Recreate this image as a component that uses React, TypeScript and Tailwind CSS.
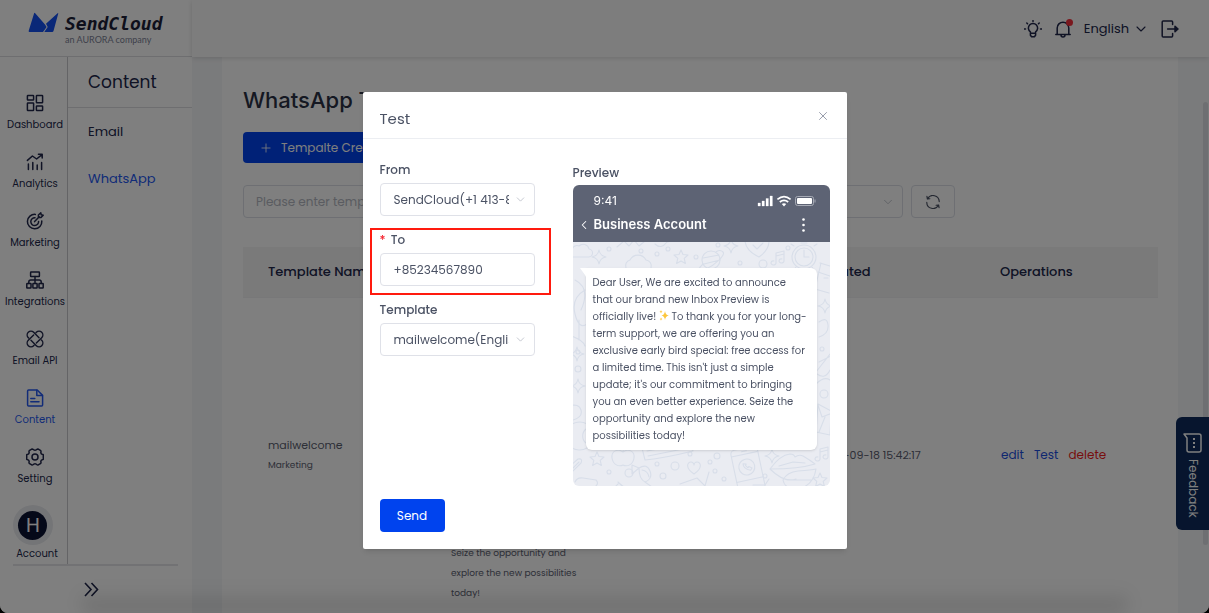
import React, { useState } from 'react'
import { ChevronDown, ChevronLeft, Plus, X } from 'lucide-react'

const greeting = 'Dear User, We are excited to announce\nthat our brand new Inbox Preview is\nofficially live! '
const offer =
  " To thank you for your long-\nterm support, we are offering you an\nexclusive early bird special: free access for\na limited time. This isn't just a simple\nupdate; it's our commitment to bringing\nyou an even better experience. Seize the\nopportunity and explore the new\npossibilities today!"

function Icon({ children, size = 18 }: { children: React.ReactNode; size?: number }) {
  return (
    <svg width={size} height={size} viewBox="0 0 18 18" fill="none" stroke="currentColor" strokeWidth="1.5" strokeLinecap="round" strokeLinejoin="round" aria-hidden="true">
      {children}
    </svg>
  )
}

const navItems = [
  {
    label: 'Dashboard',
    icon: (
      <Icon>
        <rect x="1.4" y="1.4" width="6.2" height="4.6" rx="0.6" />
        <rect x="10.4" y="1.4" width="6.2" height="7.4" rx="0.6" />
        <rect x="1.4" y="9" width="6.2" height="7.6" rx="0.6" />
        <rect x="10.4" y="12" width="6.2" height="4.6" rx="0.6" />
      </Icon>
    ),
  },
  {
    label: 'Analytics',
    icon: (
      <Icon>
        <path d="M1.4 7.4 6.4 3l4.2 3L16 1.6M12.4 1.2H16.2V5" />
        <path d="M2.4 11v5.6M6.8 9.4v7.2M11.2 12v4.6M15.6 9.6v7" />
      </Icon>
    ),
  },
  {
    label: 'Marketing',
    icon: (
      <Icon>
        <path d="M9.4 2.4a7.2 7.2 0 1 0 6.4 6.6" />
        <path d="M9 5.8a3.9 3.9 0 1 0 3.6 3.6" />
        <path d="M8.6 9.6l4.6-4.8M12.4 5.4V3L14.8.8l.4 2 2 .4L15 5.6z" />
      </Icon>
    ),
  },
  {
    label: 'Integrations',
    icon: (
      <Icon>
        <rect x="4.6" y="0.9" width="8.8" height="4.6" rx="0.5" />
        <rect x="0.8" y="12.4" width="4.2" height="4.6" rx="0.5" />
        <rect x="6.9" y="12.4" width="4.2" height="4.6" rx="0.5" />
        <rect x="13" y="12.4" width="4.2" height="4.6" rx="0.5" />
        <path d="M9 5.5v6.9M2.8 12.4V11q0-2 2-2h8.4q2 0 2 2v1.4" />
      </Icon>
    ),
  },
  {
    label: 'Email API',
    icon: (
      <Icon>
        <g transform="translate(9 9) rotate(45) scale(0.95)">
          <path d="M5.4-4H6a4 4 0 0 1 0 8H-2M-5.4 4H-6a4 4 0 0 1 0-8H2" />
          <path d="M-4-2V6a4 4 0 0 0 8 0V5.400M4 2V-6a4 4 0 0 0-8 0V-5.400" />
        </g>
      </Icon>
    ),
  },
  {
    label: 'Content',
    active: true,
    icon: (
      <Icon>
        <path d="M2.6 1h8.6l5.400 5.400V16q0 1-1 1H2.600q-1 0-1-1V2q0-1 1-1z" />
        <path d="M10.800 1.200v5.400h5.600M4.800 9.600h4M4.800 12.800h8.200" />
      </Icon>
    ),
  },
  {
    label: 'Setting',
    icon: (
      <Icon>
        <circle cx="9" cy="9" r="3" />
        <path d="M6.2.9q1 .2 1.600 1 1.200.6 2.400 0 .6-.8 1.600-1l3 1.800q.4 1 0 2 .4 1.400 1.400 1.600.8.1 1.100.5v4.400q-.3.4-1.100.5-1 .2-1.400 1.600.4 1 0 2l-3 1.800q-1-.2-1.600-1-1.200-.6-2.400 0-.6.8-1.600 1l-3-1.800q-.4-1 0-2-.4-1.400-1.400-1.600-.8-.1-1.100-.5V6.800q.3-.4 1.100-.5 1-.2 1.400-1.600-.4-1 0-2z" />
      </Icon>
    ),
  },
]

function Logo() {
  return (
    <div className="flex h-14 items-start gap-[6px] pt-3 pl-7">
      <svg width="31" height="21" viewBox="0 0 31 21" fill="#1550f0" aria-hidden="true">
        <path d="M6.2 1Q6.700.6 7.200 1.200L17 12.600 18.600 15 15 20H1.500Q.4 20 .7 18.800z" />
        <path d="M29.600 1.200q.8-.4.6.5L25.500 19q-.3 1-1.300 1H16.300L19.700 15 18 11.800z" />
      </svg>
      <div>
        <div className="font-['DejaVu_Sans_Mono',monospace] text-lg leading-6 font-bold text-[#1c1e38] italic">SendCloud</div>
        <div className="-mt-1 font-[Lato,sans-serif] text-[9px] leading-4 text-[#7c8296]">an AURORA company</div>
      </div>
    </div>
  )
}

function Sidebar() {
  return (
    <aside className="flex w-48 shrink-0 flex-col bg-white">
      <div className="border-b border-[#dcdde0]">
        <Logo />
      </div>
      <div className="flex h-[507px]">
        <nav className="flex w-[68px] shrink-0 flex-col items-center border-r border-[#c8c9cc] pt-[37px] pl-[3px]">
          {navItems.map((item) => (
            <a key={item.label} href="#" className={`flex h-[59px] flex-col items-center gap-[5px] text-[10px] leading-4 ${item.active ? 'text-[#2458f0]' : ''}`}>
              {item.icon}
              {item.label}
            </a>
          ))}
          <a href="#" className="-mt-[2px] mr-1 flex flex-col items-center text-[10px] leading-4">
            <span className="flex size-10 items-center justify-center rounded-full bg-[#e9eaee]">
              <span className="flex size-[29px] items-center justify-center rounded-full bg-[#0b1232] text-xl text-white">H</span>
            </span>
            <span className="pt-px pl-2">Account</span>
          </a>
        </nav>
        <div className="flex-1">
          <h2 className="border-b border-[#dcdde0] pl-5 text-[17px] leading-[50px]">Content</h2>
          <ul className="text-[13px] leading-[47px]">
            <li><a href="#" className="block pl-5">Email</a></li>
            <li><a href="#" className="block pl-5 text-[#2458f0]">WhatsApp</a></li>
          </ul>
        </div>
      </div>
      <div className="mr-[14px] ml-[13px] flex justify-center border-t-2 border-[#e4e5e8] pt-4 pr-2">
        <button type="button" aria-label="Expand menu">
          <svg width="15" height="15" viewBox="0 0 15 15" fill="none" stroke="currentColor" strokeWidth="1.6" aria-hidden="true">
            <path d="M1 1l6 6.500L1 14M7.500 1l6 6.500-6 6.500" />
          </svg>
        </button>
      </div>
    </aside>
  )
}

function TopBar() {
  return (
    <header className="relative flex h-[57px] shrink-0 items-center justify-end gap-3 bg-[#fafafa] pr-[30px] shadow-[0_1px_5px_rgba(0,0,0,0.15)]">
      <button type="button" aria-label="Tips">
        <Icon>
          <path d="M6.4 13.200v-1.400a4.600 4.600 0 1 1 5.200 0v1.400zM6.400 13.200v2l1.200 1.600h2.800l1.200-1.600v-2M9 .6v1M2.800 3l.7.7M15.200 3l-.7.7M.4 9h1.100M16.500 9h1.100" />
        </Icon>
      </button>
      <button type="button" aria-label="Notifications" className="relative">
        <Icon>
          <path d="M3.200 14.600V8a5.800 5.800 0 0 1 11.600 0v6.600M1.800 14.600h14.400M7 15q0 2 2 2t2-2" />
        </Icon>
        <span className="absolute -top-px -right-px size-[7px] rounded-full bg-[#f5303c]" />
      </button>
      <button type="button" className="flex items-center gap-1 text-[13px]">
        English
        <ChevronDown size={16} strokeWidth={1.6} />
      </button>
      <button type="button" aria-label="Log out">
        <Icon>
          <path d="M11.600 4.400V2q0-1-1-1H2.200q-1 0-1 1v14q0 1 1 1h8.400q1 0 1-1v-2.400M6.600 9h9.600" />
          <path d="M14 6.200 17 9l-3 2.800z" fill="currentColor" />
        </Icon>
      </button>
    </header>
  )
}

const th = 'h-[50px] pl-[25px] text-left text-[13px] font-medium'

function TemplateList() {
  return (
    <main className="flex flex-1 justify-center overflow-hidden bg-[#f5f6f8] pr-[31px] pl-[30px]">
      <div className="w-full bg-white pr-5 pl-[21px]">
        <h1 className="pt-[27px] font-[Inter,sans-serif] text-[22px] leading-8 font-medium text-[#2a3145]">WhatsApp Template</h1>
        <button type="button" className="mt-4 flex h-[31px] items-center gap-2 rounded bg-[#0043ee] px-4 text-xs text-white">
          <Plus size={14} strokeWidth={1.4} />
          Tempalte Create
        </button>
        <div className="mt-[22px] flex gap-2 text-xs text-[#4b5264]">
          <input aria-label="Template name" placeholder="Please enter template name" className="h-[33px] w-[220px] rounded border border-[#dcdfe6] px-3 placeholder:text-[#b4b8c2]" />
          <select aria-label="Category" className="h-[33px] w-[212px] appearance-none rounded border border-[#dcdfe6] px-3">
            <option>Category</option>
          </select>
          <div className="relative">
            <select aria-label="Status" className="h-[33px] w-[212px] appearance-none rounded border border-[#dcdfe6] px-3">
              <option>Status</option>
            </select>
            <ChevronDown size={14} strokeWidth={1.4} className="pointer-events-none absolute top-[10px] right-2 text-[#b4b8c2]" />
          </div>
          <button type="button" aria-label="Refresh" className="flex h-[33px] w-11 items-center justify-center rounded border border-[#dcdfe6]">
            <Icon size={14}>
              <path d="M2 4.800A8 8 0 0 1 17 8.500M1.200 1.800 1.800 5.200 5 4.800M16 13.200A8 8 0 0 1 1 9.500M16.800 16.200 16.200 12.800 13 13.200" />
            </Icon>
          </button>
        </div>
        <table className="mt-[29px] w-full table-fixed border-collapse">
          <thead className="border-b border-[#f0f0f2] bg-[#f4f4f5]">
            <tr>
              <th className={th}>Template Name</th>
              <th className={th}>Message</th>
              <th className={th}>Status</th>
              <th className={th}>Created</th>
              <th className={th}>Operations</th>
            </tr>
          </thead>
          <tbody className="text-[#5b6070]">
            <tr className="h-[316px]">
              <td className="pl-[25px]">
                <div className="text-[11px] leading-5">mailwelcome</div>
                <div className="text-[9px] leading-5">Marketing</div>
              </td>
              <td className="pb-[10px] pl-[25px] align-bottom text-[9px] leading-5">
                Seize the opportunity and
                <br />
                explore the new possibilities
                <br />
                today!
              </td>
              <td className="pl-[25px] text-[11px]">Approved</td>
              <td className="pl-[25px] text-[11px] whitespace-nowrap">2024-09-18 15:42:17</td>
              <td className="pl-[26px] text-xs">
                <div className="flex gap-[10px]">
                  <a href="#" className="text-[#1c4fe0]">edit</a>
                  <a href="#" className="text-[#1c4fe0]">Test</a>
                  <a href="#" className="text-[#f01c1c]">delete</a>
                </div>
              </td>
            </tr>
          </tbody>
        </table>
      </div>
    </main>
  )
}

function ChatDoodles() {
  return (
    <svg className="absolute inset-0 h-full w-full" viewBox="0 0 257 244" preserveAspectRatio="xMidYMid slice" fill="none" stroke="#d8dee9" strokeWidth="1.1" strokeLinejoin="round" strokeLinecap="round" aria-hidden="true">
      <defs>
        <path id="spark" d="M0-7Q1-1 7 0 1 1 0 7-1 1-7 0-1-1 0-7z" />
        <path id="star" d="M0-7 2-2.500 7-2 3.200 1.400 4.400 6.500 0 4-4.400 6.500-3.200 1.400-7-2-2-2.500z" />
        <path id="heart" d="M0 6C-9 0-7-6-3-6-1-6 0-4 0-3 0-4 1-6 3-6 7-6 9 0 0 6z" />
        <path id="cloud" d="M-8 5h15a4 4 0 0 0 1-8 6 6 0 0 0-10-3 5 5 0 0 0-7 4 4 4 0 0 0 1 7z" />
        <path id="note" d="M-3 5V-5L5-7V3M-3-2 5-4M-3 5a2.500 2 0 1 1-2-2M5 3a2.500 2 0 1 1-2-2" />
      </defs>
      <use href="#cloud" x="8" y="10" />
      <use href="#spark" x="26" y="15" />
      <path d="M44 5l7-6 5 5 5-6 5 6 6-5M82 2q6 6 12-2l14-3" />
      <path d="M53 26a6 6 0 0 1 4-8 9 9 0 0 1 16 0 6 6 0 0 1 5 8" />
      <use href="#star" x="108" y="15" />
      <circle cx="138" cy="18" r="9" />
      <path d="M130 22c-7 7-6 9 3 5s20-14 17-17-7 0-7 0M130 16l16-3M131 22l16-4" />
      <use href="#spark" x="158" y="4" />
      <path d="M172-1q1 10 14 16 10-7 10-16M180 3l4 4 6-6" />
      <use href="#note" x="206" y="16" />
      <circle cx="231" cy="15" r="12" />
      <circle cx="231" cy="15" r="9" />
      <path d="M231 8v7h5M228 1h6M221 4l-3-2M241 4l3-2M223 25l-2 3M239 25l2 3" />
      <path d="M247 21l10 3M245 30l12 4M248 21l-6 26 14 4M251 36h4" />
      <g>
        <circle cx="36" cy="7" r="2" /><circle cx="68" cy="9" r="2" /><circle cx="84" cy="12" r="2" /><circle cx="95" cy="7" r="2" />
        <circle cx="123" cy="15" r="2" /><circle cx="145" cy="3" r="2" /><circle cx="190" cy="22" r="4" /><circle cx="167" cy="21" r="2" />
        <circle cx="215" cy="6" r="2" /><circle cx="5" cy="127" r="3" /><circle cx="5" cy="110" r="2" /><circle cx="249" cy="107" r="2" />
      </g>
      <path d="M2 38q16 8 6 30M12 48Q-2 56 2 72t12 10M6 78v20M-2 94q12 4 14 10" />
      <use href="#spark" x="4" y="112" /><use href="#spark" x="5" y="144" />
      <path d="M-4 164q10-3 12 4t-8 10M14 182a14 14 0 1 0 0 24M13 187a9 9 0 0 0 0 14" />
      <use href="#spark" x="252" y="64" />
      <path d="M246 80q8-6 9 3t-9 12M246 120l12-6M244 132q8 6 13-4M243 130l14-18M243 142q8-8 14-4" />
      <circle cx="251" cy="152" r="4" />
      <path d="M245 162l13 7-1 24-14-3zM245 163l4 12 10-4M246 190l6-15" />
      <use href="#note" x="250" y="212" />
      <path d="M-3 224l8-7q5-1 3 4l-9 9M0 226l6-6" />
      <use href="#star" x="24" y="217" />
      <path d="M50 210c-5-4-12-1-11 6s7 9 11 7c4 2 10 0 11-7s-6-10-11-6zM50 210q0-5 4-6" />
      <path d="M69 206l3 12q20-2 48-9l-3-9M75 214l35-7M74 209l38-7" />
      <path d="M2 240q2-5 8-4l13 2q3 3 0 6M45 240l4 4M41 246l5-5 5 4" />
      <path d="M66 226l-7-3 0 9zM66 226q8-5 11 3t-5 11q-6-3-6-14zM72 240l7 5M69 228q6 1 7 7" />
      <circle cx="56" cy="231" r="4" /><circle cx="36" cy="230" r="2" /><circle cx="102" cy="224" r="4" /><circle cx="84" cy="222" r="2" />
      <circle cx="90" cy="234" r="3" /><circle cx="117" cy="212" r="2" /><circle cx="137" cy="220" r="2" /><circle cx="144" cy="214" r="3" />
      <circle cx="142" cy="229" r="2" /><circle cx="151" cy="237" r="2" /><circle cx="192" cy="234" r="2" /><circle cx="207" cy="205" r="2" />
      <use href="#heart" x="121" y="226" />
      <path d="M107 242l17-6 8 8M136 230l-4 14" />
      <g transform="rotate(-12 174 226)">
        <rect x="161" y="206" width="27" height="44" rx="4" />
        <path d="M161 212h27M161 238h27M172 209h5" />
        <circle cx="174" cy="225" r="8" />
        <path d="M171 221q-1 5 6 8l2-2-3-2-1 1-2-3 1-1z" />
      </g>
      <use href="#spark" x="199" y="214" />
      <path d="M197 227q10-14 20-15 4 0 5 3 4-3 8-1 7 4 12 8-16 5-45 5zM197 227q14 14 26 10M206 224l14-4 12 1M210 238q4-8 15-9 14-1 18-2-2 14-14 19h-12q-6-2-7-8zM214 238h24" />
      <use href="#star" x="247" y="238" />
      <path d="M180 243h12l4-6" />
    </svg>
  )
}

function PhonePreview() {
  return (
    <div className="overflow-hidden rounded-md">
      <div className="h-[57px] bg-[#5d6374] pt-[7px] font-[Inter,sans-serif] text-white">
        <div className="flex h-[18px] items-center justify-between pr-[14px] pl-[21px]">
          <span className="text-xs">9:41</span>
          <svg width="59" height="12" viewBox="0 0 59 12" fill="none" aria-hidden="true">
            <path d="M1 8h2.400v3H1zM5 6h2.400v5H5zM9 3.500h2.400V11H9zM13 1h2.400v10H13z" fill="#fff" stroke="#fff" strokeWidth=".3" />
            <path d="M20.400 4.400q6.600-5.600 13.200 0M22.800 7q4.200-3.400 8.400 0" stroke="#fff" strokeWidth="1.700" />
            <path d="M24.800 9q2.200-1.700 4.400 0L27 11.400z" fill="#fff" />
            <rect x="38.500" y="1.500" width="18" height="9" rx="2" stroke="#a6aab5" />
            <rect x="40" y="3" width="15" height="6" rx="1" fill="#fff" />
            <path d="M58 4.500v3" stroke="#a6aab5" />
          </svg>
        </div>
        <div className="flex h-[30px] items-center pr-[25px] pl-1">
          <ChevronLeft size={14} strokeWidth={1.8} />
          <span className="ml-[3px] flex-1 text-[13px] font-semibold">Business Account</span>
          <svg width="3" height="14" viewBox="0 0 3 14" fill="#fff" aria-hidden="true">
            <circle cx="1.500" cy="1.500" r="1.300" />
            <circle cx="1.500" cy="7" r="1.300" />
            <circle cx="1.500" cy="12.500" r="1.300" />
          </svg>
        </div>
      </div>
      <div className="relative h-[244px] bg-[#eaecf2] px-[13px] pt-[26px]">
        <ChatDoodles />
        <div className="relative rounded-md rounded-tl-none bg-white py-[6px] pl-[7px] text-[10px] leading-[17px] whitespace-pre text-[#4b5264] shadow-sm">
          <svg className="absolute top-0 -left-[6px]" width="7" height="11" viewBox="0 0 7 11" fill="#fff" aria-hidden="true">
            <path d="M0 0h7v11L5 7z" />
          </svg>
          {greeting}
          <svg className="inline-block align-[-1px]" width="10" height="11" viewBox="0 0 10 11" fill="#fcc63c" aria-hidden="true">
            <path d="M6 1Q6.500 5 9.800 5.500 6.500 6 6 10 5.500 6 2.500 5.500 5.500 5 6 1zM2 0q.2 1.500 1.500 1.800Q2.200 2 2 3.500 1.800 2 .5 1.800 1.800 1.500 2 0zM2 7.500q.2 1.400 1.400 1.600Q2.200 9.400 2 10.800 1.800 9.400.6 9.100 1.800 9 2 7.500z" />
          </svg>
          {offer}
        </div>
      </div>
    </div>
  )
}

const field = 'block h-[33px] w-full appearance-none rounded border border-[#dfe1e8] bg-white pl-[13px] text-xs text-[#4b5264]'
const fieldLabel = 'mb-[3px] block text-xs leading-5 font-medium'

function SelectField({ id, label, value }: { id: string; label: string; value: string }) {
  return (
    <div>
      <label htmlFor={id} className={fieldLabel}>{label}</label>
      <div className="relative">
        <select id={id} className={`${field} pr-[25px]`}>
          <option>{value}</option>
        </select>
        <ChevronDown size={13} strokeWidth={1.4} className="pointer-events-none absolute top-[10px] right-2 text-[#b4b8c2]" />
      </div>
    </div>
  )
}

function TestDialog() {
  const [to, setTo] = useState('+85234567890')

  return (
    <div className="fixed inset-0 flex items-start justify-center bg-black/50 pt-[92px]">
      <div role="dialog" aria-label="Test" className="w-[484px] rounded-xs bg-white text-[#4b5264] shadow-md">
        <div className="flex h-[47px] items-center justify-between border-b border-[#eceef2] px-[17px] pt-2">
          <h2 className="text-[15px]">Test</h2>
          <button type="button" aria-label="Close" className="text-[#8a90a0]"><X size={14} strokeWidth={1.5} className="mb-[6px]" /></button>
        </div>
        <form className="px-[17px] pb-[17px]" onSubmit={(e) => e.preventDefault()}>
          <div className="flex justify-between">
            <div className="flex w-[155px] flex-col gap-[14px] pt-[21px]">
              <SelectField id="from" label="From" value="SendCloud(+1 413-889-0012)" />
              <div className="relative">
                <label htmlFor="to" className={fieldLabel}>
                  <span className="mr-[2px] text-[#f5222d]">*</span>
                  {' To'}
                </label>
                <input id="to" value={to} onChange={(e) => setTo(e.target.value)} className={field} />
                <div className="pointer-events-none absolute -top-[2px] -right-4 -bottom-[9px] -left-[10px] border-2 border-[#ff1a0e]" />
              </div>
              <SelectField id="template" label="Template" value="mailwelcome(English)" />
            </div>
            <div className="w-[257px] pt-6">
              <div className="mb-[2px] text-xs leading-5 font-medium">Preview</div>
              <PhonePreview />
            </div>
          </div>
          <button type="submit" className="mt-[13px] h-[33px] w-[65px] rounded bg-[#0043ee] text-xs text-white">Send</button>
        </form>
      </div>
    </div>
  )
}

export default function App() {
  return (
    <div className="h-screen overflow-hidden bg-black font-['Poppins','Inter',sans-serif] text-[#20264a]">
      <div className="flex h-full overflow-hidden rounded-b-lg bg-white">
        <Sidebar />
        <div className="flex min-w-0 flex-1 flex-col">
          <TopBar />
          <TemplateList />
        </div>
      </div>
      <div className="fixed top-[102px] right-px h-[443px] w-[5px] rounded-full bg-[#dddfe4]" />
      <button type="button" className="fixed top-[417px] right-0 flex h-[113px] w-[33px] flex-col items-center gap-[6px] rounded-l-md bg-[#0e2b5c] pt-4 text-xs text-white">
        <svg width="19" height="20" viewBox="0 0 19 20" fill="none" stroke="currentColor" strokeWidth="1.5" strokeLinejoin="round" aria-hidden="true">
          <path d="M1 1h15q2 0 2 2v14q0 2-2 2H6q-2 0-2-2V5z" />
          <path d="M11 5v2M11 9v2M11 13v2" strokeWidth="2" />
        </svg>
        <span className="[writing-mode:vertical-rl]">Feedback</span>
      </button>
      <TestDialog />
      <div className="pointer-events-none fixed right-20 bottom-0 left-20 h-6 rounded-full bg-linear-to-b from-transparent to-black/15 blur-sm" />
    </div>
  )
}
